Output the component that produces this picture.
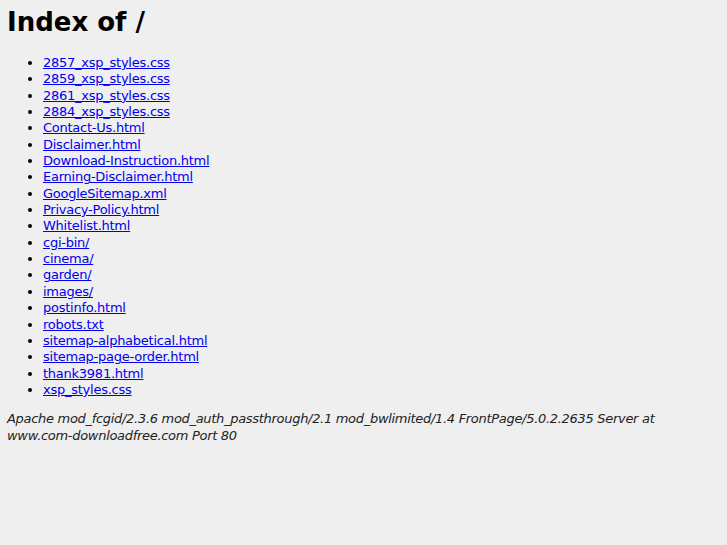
import React from 'react';

const files = [
  '2857_xsp_styles.css',
  '2859_xsp_styles.css',
  '2861_xsp_styles.css',
  '2884_xsp_styles.css',
  'Contact-Us.html',
  'Disclaimer.html',
  'Download-Instruction.html',
  'Earning-Disclaimer.html',
  'GoogleSitemap.xml',
  'Privacy-Policy.html',
  'Whitelist.html',
  'cgi-bin/',
  'cinema/',
  'garden/',
  'images/',
  'postinfo.html',
  'robots.txt',
  'sitemap-alphabetical.html',
  'sitemap-page-order.html',
  'thank3981.html',
  'xsp_styles.css',
];

export default function App() {
  return (
    <div className="min-h-screen bg-[#efefef] text-black font-['DejaVu_Sans',sans-serif] pl-[7px] pt-[7px]">
      <h1 className="text-[26px] font-bold leading-[30px]">Index of /</h1>

      {/* directory listing */}
      <ul className="list-disc mt-[18px] pl-[36px] text-[13px] leading-[16.35px] tracking-[-0.25px]">
        {files.map((f) => (
          <li key={f}>
            <a href="#" className="text-[#0000ee] underline">
              {f}
            </a>
          </li>
        ))}
      </ul>

      <address className="mt-[12px] text-[13px] leading-[17px] italic text-[#222] tracking-[-0.3px]">
        Apache mod_fcgid/2.3.6 mod_auth_passthrough/2.1 mod_bwlimited/1.4 FrontPage/5.0.2.2635 Server at{' '}
        <span className="whitespace-nowrap">www.com-downloadfree.com</span> Port 80
      </address>
    </div>
  );
}
